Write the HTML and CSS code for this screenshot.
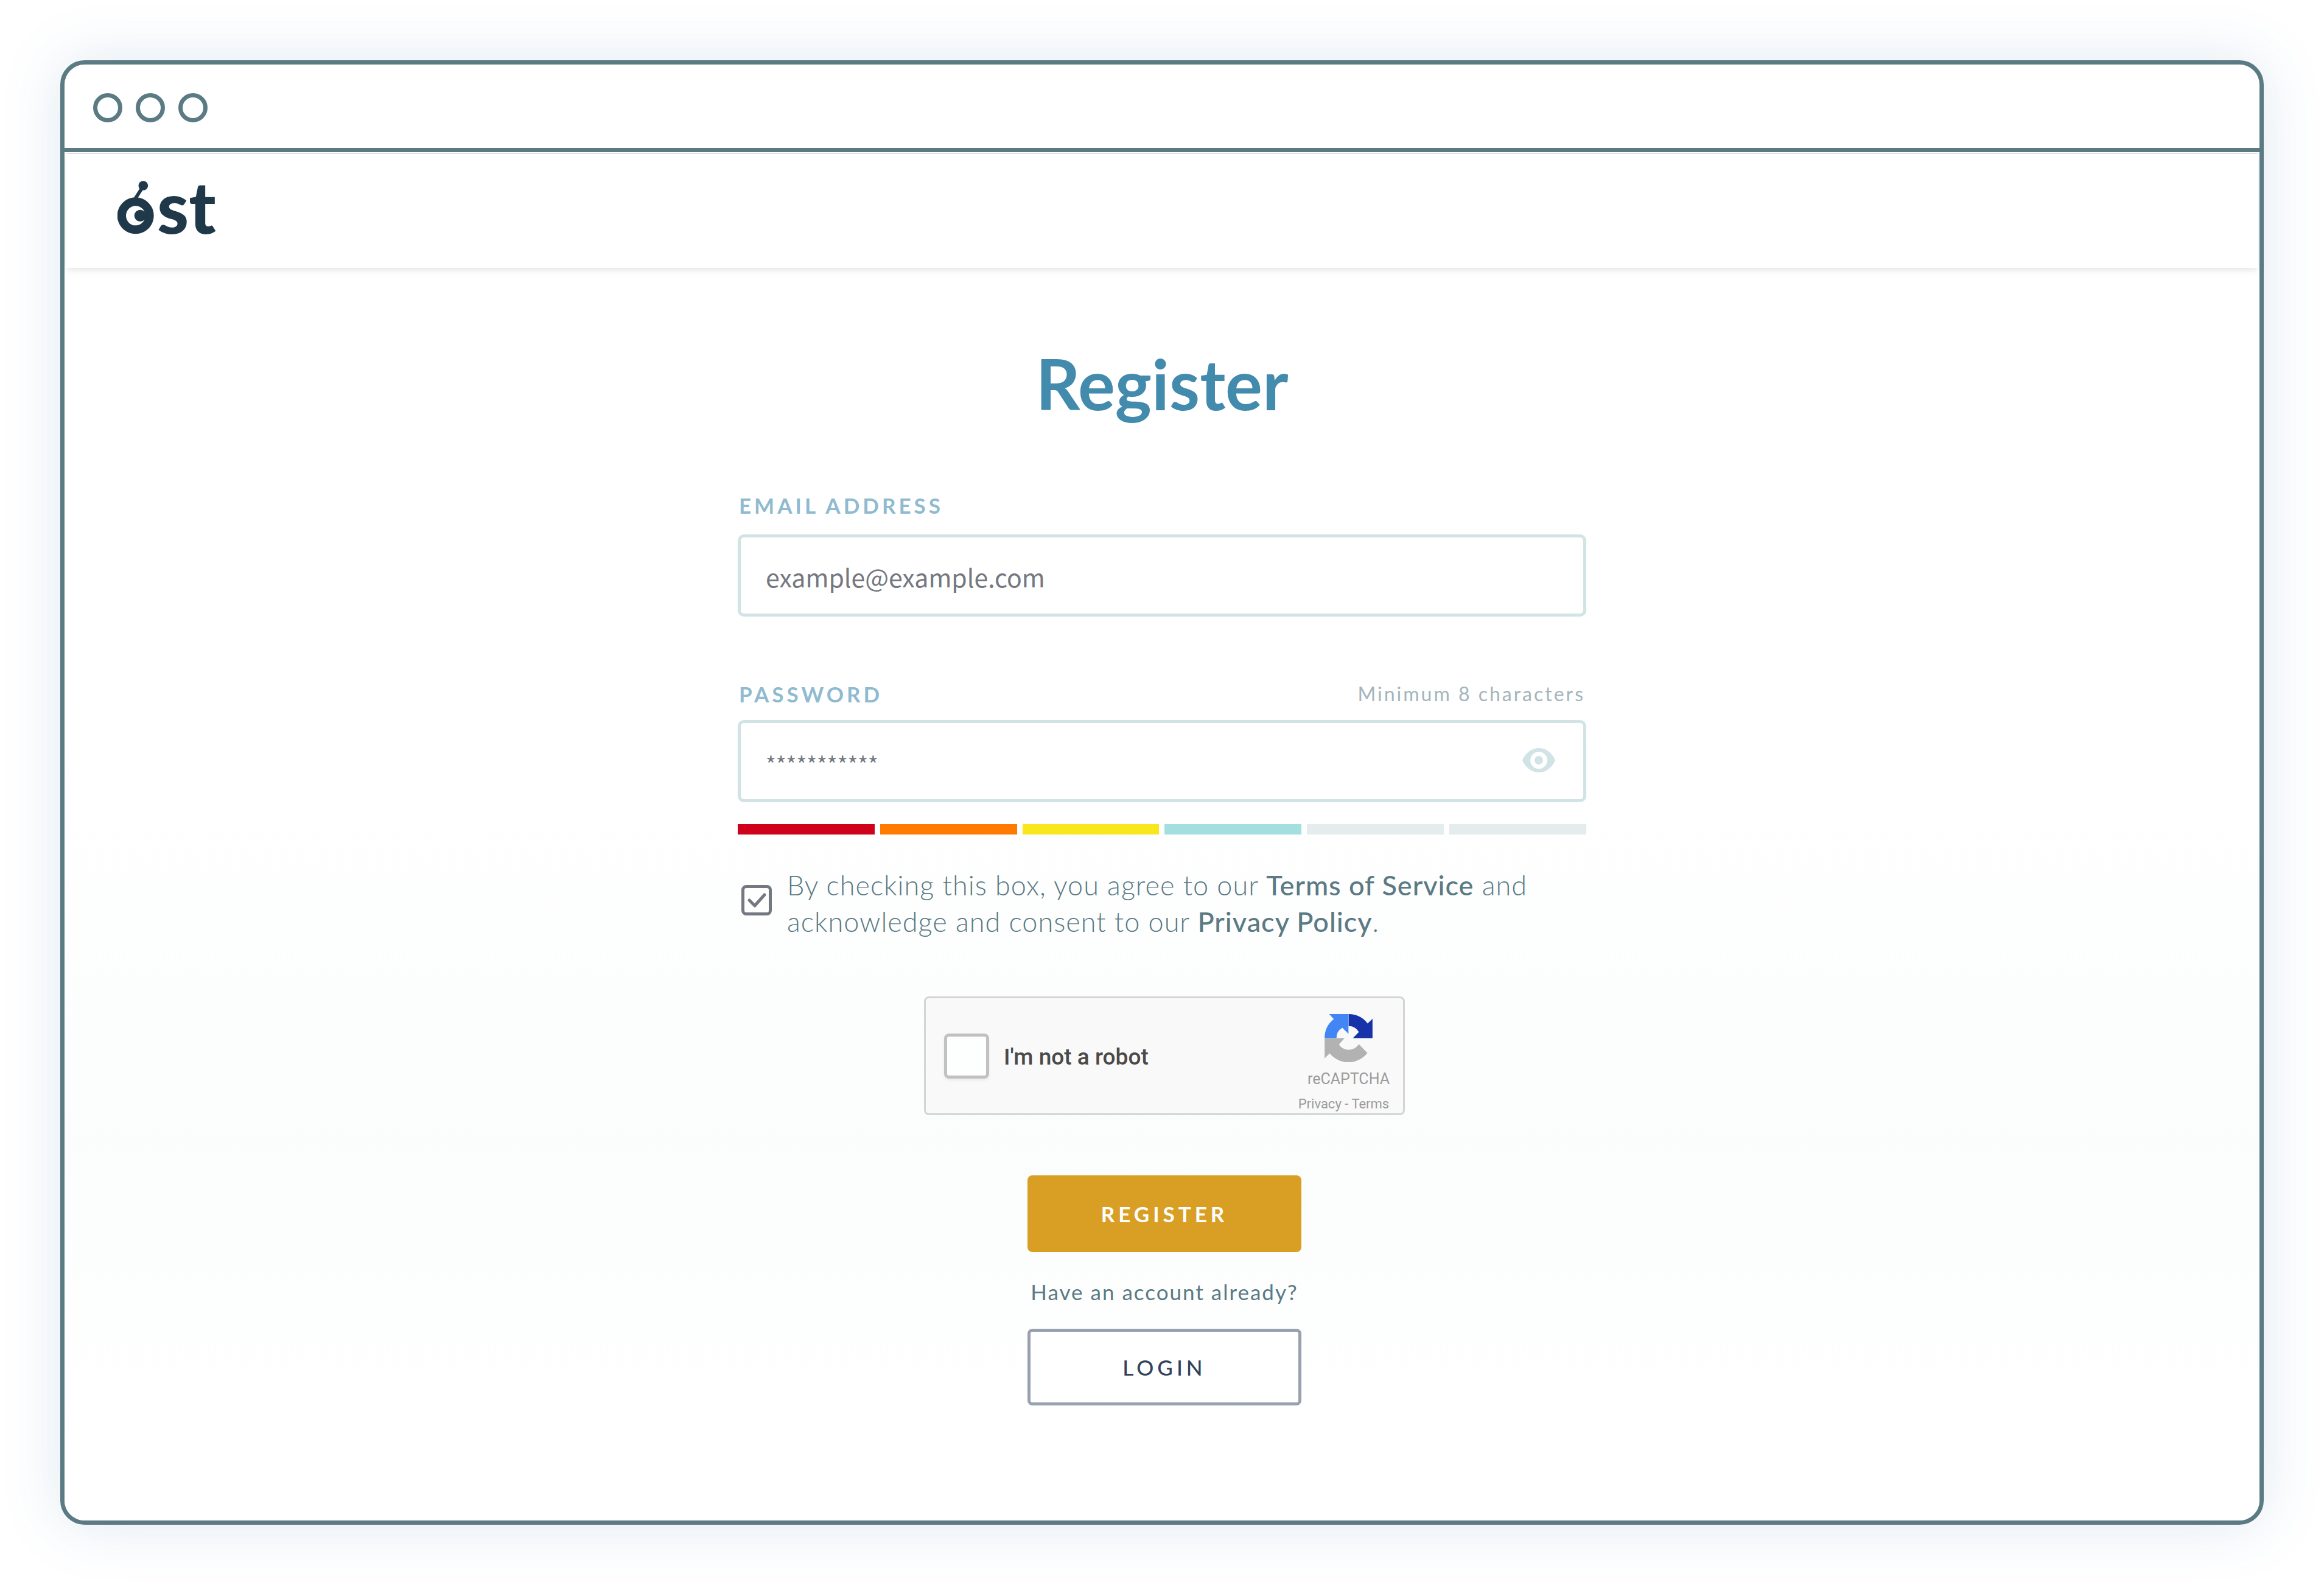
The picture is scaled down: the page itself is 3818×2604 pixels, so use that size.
FILE: index.html
```html
<!DOCTYPE html>
<html lang="en">
<head>
<meta charset="utf-8">
<title>Register</title>
<link rel="stylesheet" href="styles.css">
</head>
<body>
<div class="window">
  <div class="titlebar">
    <span class="dot"></span><span class="dot"></span><span class="dot"></span>
  </div>
  <header class="header">
    <a class="logo" href="#" aria-label="ost">
      <svg class="logo-mark" viewBox="0 0 180 264" aria-hidden="true">
        <path fill-rule="evenodd" d="M89 82a90 90 0 1 0 .1 0zM89 124c18 0 35 10 44 28a29 29 0 1 0 0 40c-9 18-26 28-44 28a47 48 0 0 1 0-96z"/>
        <path d="M88 88L121 36" stroke-width="17"/>
        <circle cx="127" cy="24" r="23.500"/>
      </svg>
      <span class="logo-text">st</span>
    </a>
  </header>
  <main class="main">
    <form class="form">
      <h1 class="title">Register</h1>
      <div class="field">
        <div class="field-head"><label class="label" for="email">EMAIL ADDRESS</label></div>
        <div class="box"><input class="input" id="email" type="email" placeholder="example@example.com"></div>
      </div>
      <div class="field field-password">
        <div class="field-head">
          <label class="label" for="password">PASSWORD</label>
          <span class="hint">Minimum 8 characters</span>
        </div>
        <div class="box">
          <input class="input input-password" id="password" type="password" placeholder="***********">
          <button class="reveal" type="button" aria-label="Show password">
            <svg class="eye" viewBox="0 0 54 40" aria-hidden="true">
              <path fill-rule="evenodd" d="M0 20C5 8 15 0 27 0s22 8 27 20c-5 12-15 20-27 20S5 32 0 20zM27 6a14 14 0 1 0 .1 0z"/>
              <circle cx="27" cy="20" r="7"/>
            </svg>
          </button>
        </div>
      </div>
      <div class="strength">
        <span class="bar bar-red"></span><span class="bar bar-orange"></span><span class="bar bar-yellow"></span><span class="bar bar-teal"></span><span class="bar"></span><span class="bar"></span>
      </div>
      <div class="terms">
        <span class="check">
          <input class="check-input" id="terms" type="checkbox" checked>
          <svg class="check-mark" viewBox="0 0 50 50" aria-hidden="true"><path d="M13 25l9 9 16-18"/></svg>
        </span>
        <label class="terms-text" for="terms">By checking this box, you agree to our <a href="#">Terms of Service</a> and<br>acknowledge and consent to our <a href="#">Privacy Policy</a>.</label>
      </div>
      <div class="actions">
        <div class="captcha">
          <input class="captcha-input" id="robot" type="checkbox">
          <label class="captcha-label" for="robot">I'm not a robot</label>
          <div class="captcha-side">
            <div class="captcha-brand">
              <svg class="captcha-logo" viewBox="0 0 235 236" aria-hidden="true">
                <path fill="#4285f4" d="M22 0H117V97L87 67A58 58 0 0 0 58 118H0A118 118 0 0 1 45 25z"/>
                <path fill="#1833aa" d="M118 0A118 118 0 0 1 211 46L235 23V118H139L168 88A58 58 0 0 0 118 59z"/>
                <path fill="#b2b2b2" d="M0 118H98L70 149A58 58 0 0 0 168 148L210 191A118 118 0 0 1 25 193L0 217z"/>
              </svg>
              <span class="captcha-name">reCAPTCHA</span>
            </div>
            <span class="captcha-links"><a href="#">Privacy</a> - <a href="#">Terms</a></span>
          </div>
        </div>
        <button class="btn btn-primary" type="submit">REGISTER</button>
        <p class="have">Have an account already?</p>
        <button class="btn btn-outline" type="button">LOGIN</button>
      </div>
    </form>
  </main>
</div>
</body>
</html>
```
FILE: styles.css
```css
* {
  box-sizing: border-box;
}

body {
  margin: 0;
  padding: 99px;
  background: #fff;
  font-family: Lato, "Liberation Sans", sans-serif;
  color: #5a7a84;
}

a {
  color: inherit;
  text-decoration: none;
}

.window {
  border: 7px solid #5a7a84;
  border-radius: 40px;
  background: #fff;
  box-shadow: 0 0 100px rgba(65, 120, 165, 0.16);
  overflow: hidden;
}

.titlebar {
  display: flex;
  gap: 22px;
  padding: 47px 47px 42px;
  border-bottom: 7px solid #5a7a84;
}

.dot {
  width: 48px;
  height: 48px;
  border: 7px solid #5a7a84;
  border-radius: 50%;
}

.header {
  position: relative;
  margin: 2px 3px 0;
  padding: 44px 84px 55px;
  border-top: 1px solid #d4d4d4;
  background: #fff;
  box-shadow: 0 5px 10px -1px rgba(0, 0, 0, 0.1);
}

.logo {
  display: flex;
  gap: 5px;
  color: #1f394b;
}

.logo-mark {
  width: 60px;
  height: 88px;
  fill: currentColor;
  stroke: none;
}

.logo-mark path[stroke-width] {
  stroke: currentColor;
}

.logo-text {
  font-size: 118px;
  font-weight: 900;
  line-height: 84px;
  height: 88px;
}

.main {
  padding: 122px 40px 189px;
  background: linear-gradient(#fff 35%, #fbfdfc 70%, #fff 96%);
}

.form {
  max-width: 1394px;
  margin: 0 auto;
}

.title {
  margin: 0 0 110px;
  font-size: 114px;
  line-height: 136px;
  font-weight: 700;
  text-align: center;
  color: #438bad;
}

.field {
  display: flex;
  flex-direction: column;
  gap: 26px;
  margin-bottom: 105px;
}

.field-password {
  gap: 21px;
  margin-bottom: 36px;
}

.field-head {
  display: flex;
  justify-content: space-between;
  padding: 0 2px;
  line-height: 44px;
}

.label {
  font-size: 35px;
  font-weight: 700;
  letter-spacing: 5px;
  color: #8fbad0;
}

.hint {
  font-size: 32px;
  letter-spacing: 3px;
  color: #a3b5bb;
}

.box {
  display: flex;
  height: 135px;
  border: 5px solid #d1e3e5;
  border-radius: 10px;
  background: #fff;
}

.input {
  flex: 1;
  min-width: 0;
  padding: 3px 41px 0;
  border: 0;
  outline: 0;
  background: none;
  font: 41px "Noto Sans CJK SC", sans-serif;
  color: #747880;
}

.input-password {
  padding-top: 6px;
  font-size: 36px;
}

.input::placeholder {
  color: #747880;
  opacity: 1;
}

.reveal {
  padding: 0 46px 4px;
  border: 0;
  background: none;
}

.eye {
  display: block;
  width: 54px;
  height: 40px;
  fill: #d1e3e5;
}

.strength {
  display: grid;
  grid-template-columns: repeat(6, 1fr);
  gap: 9px;
}

.bar {
  height: 17px;
  background: #e4ecee;
}

.bar-red {
  background: #d0021b;
}

.bar-orange {
  background: #ff7b00;
}

.bar-yellow {
  background: #f8e71c;
}

.bar-teal {
  background: #a4dfe0;
}

.terms {
  display: flex;
  gap: 25px;
  margin: 53px 0 93px;
  padding-left: 6px;
}

.check {
  display: grid;
  height: 50px;
  margin-top: 30px;
}

.check-input {
  grid-area: 1 / 1;
  appearance: none;
  width: 50px;
  height: 50px;
  margin: 0;
  border: 5px solid #747880;
  border-radius: 8px;
  background: #fff;
}

.check-mark {
  grid-area: 1 / 1;
  width: 50px;
  height: 50px;
  fill: none;
  stroke: #747880;
  stroke-width: 5;
  stroke-linecap: round;
  stroke-linejoin: round;
  pointer-events: none;
}

.terms-text {
  font-size: 45px;
  line-height: 60px;
  font-weight: 300;
  letter-spacing: 1px;
}

.terms-text a {
  font-weight: 500;
}

.actions {
  display: flex;
  flex-direction: column;
  align-items: center;
  padding-left: 8px;
}

.captcha {
  display: flex;
  align-items: center;
  gap: 24px;
  width: 790px;
  height: 195px;
  margin-bottom: 99px;
  padding: 0 22px 0 30px;
  border: 3px solid #d3d5d5;
  border-radius: 8px;
  background: #f9f9f9;
  font-family: Roboto, sans-serif;
}

.captcha-input {
  appearance: none;
  width: 74px;
  height: 74px;
  margin: 0;
  border: 5px solid #c1c1c1;
  border-radius: 8px;
  background: #fdfefe;
  box-shadow: 0 3px 5px rgba(0, 0, 0, 0.06);
}

.captcha-label {
  padding-top: 4px;
  font-size: 37px;
  font-weight: 500;
  color: #4a4a4a;
}

.captcha-side {
  display: flex;
  flex-direction: column;
  gap: 13px;
  align-self: flex-start;
  align-items: center;
  margin-left: auto;
  padding-top: 26px;
  color: #9b9b9b;
}

.captcha-brand {
  display: flex;
  flex-direction: column;
  gap: 12px;
  align-items: center;
  padding-left: 16px;
}

.captcha-logo {
  width: 79px;
  height: 79px;
}

.captcha-name {
  font-size: 25px;
  line-height: 32px;
}

.captcha-links {
  font-size: 22px;
  line-height: 24px;
}

.btn {
  width: 450px;
  height: 126px;
  border: 0;
  border-radius: 8px;
  font-family: inherit;
  font-size: 35px;
  font-weight: 700;
  letter-spacing: 6px;
}

.btn-primary {
  background: #d99f24;
  color: #fff;
}

.btn-outline {
  border: 5px solid #98a2ae;
  background: #fff;
  font-weight: 500;
  color: #314259;
}

.have {
  margin: 43px 0 39px;
  font-size: 35px;
  line-height: 44px;
  letter-spacing: 2px;
}
```
